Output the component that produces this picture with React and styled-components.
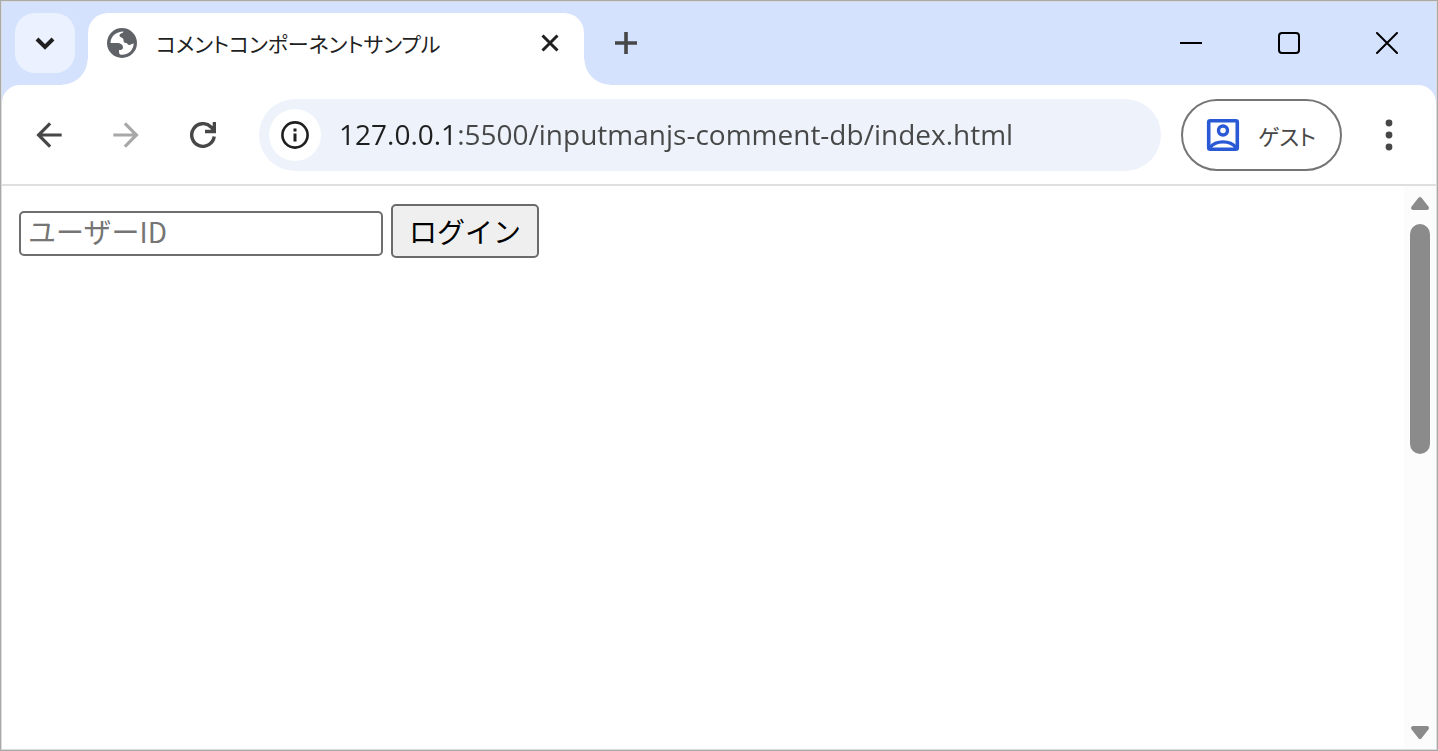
import { useState } from 'react';
import styled, { createGlobalStyle } from 'styled-components';

const GlobalStyle = createGlobalStyle`
  * {
    box-sizing: border-box;
  }

  body {
    margin: 0;
    background: #fff;
    font-family: "Noto Sans CJK JP", sans-serif;
  }

  button, input {
    margin: 0;
    font-family: inherit;
  }
`;

const Window = styled.div`
  display: flex;
  flex-direction: column;
  min-height: 100vh;
  border: 1px solid #a9a9a9;
  box-shadow: inset 0 0 0 1px #dcdcdc;
  padding: 1px;
`;

const TabStrip = styled.header`
  display: flex;
  align-items: flex-start;
  height: 83px;
  padding: 11px 0 0 13px;
  background: #d5e2fd;
`;

const IconButton = styled.button`
  display: flex;
  align-items: center;
  justify-content: center;
  flex: none;
  width: ${props => props.$size}px;
  height: ${props => props.$size}px;
  padding: 0;
  border: 0;
  border-radius: ${props => props.$radius || 0}px;
  background: ${props => props.$background || 'transparent'};
  color: ${props => props.$color || '#474747'};
`;

const Tab = styled.div`
  position: relative;
  display: flex;
  align-items: center;
  gap: 18px;
  flex: 0 1 496px;
  height: 72px;
  margin-left: 13px;
  padding: 0 14px 12px 18px;
  border-radius: 20px 20px 0 0;
  background: #fff;

  &::before,
  &::after {
    content: "";
    position: absolute;
    bottom: 0;
    width: 26px;
    height: 26px;
  }

  &::before {
    right: 100%;
    background: radial-gradient(circle at 0 0, transparent 25px, #fff 26px);
  }

  &::after {
    left: 100%;
    background: radial-gradient(circle at 100% 0, transparent 25px, #fff 26px);
  }
`;

const TabTitle = styled.span`
  flex: 1;
  overflow: hidden;
  white-space: nowrap;
  font-size: 21px;
  line-height: 32px;
  font-feature-settings: "palt";
  color: #1f1f1f;
`;

const NewTab = styled.div`
  margin-left: 12px;
`;

const WindowControls = styled.div`
  display: flex;
  gap: 38px;
  margin-left: auto;
  padding-right: 19px;
`;

const ToolbarBack = styled.div`
  background: #d5e2fd;
`;

const Toolbar = styled.div`
  display: flex;
  align-items: center;
  height: 101px;
  padding: 0 17px;
  border-bottom: 2px solid #dfdfdf;
  border-radius: 18px 18px 0 0;
  background: #fff;
`;

const NavButtons = styled.nav`
  display: flex;
  gap: 17px;
`;

const AddressBar = styled.div`
  display: flex;
  align-items: center;
  gap: 18px;
  flex: 1;
  height: 72px;
  margin: 0 20px 0 26px;
  padding: 0 24px 0 10px;
  border-radius: 36px;
  background: #edf2fb;
`;

/* The host part of the address is darker than the path after it. */
const AddressInput = styled.input`
  flex: 1;
  min-width: 0;
  height: 44px;
  padding: 0 0 2px;
  border: 0;
  outline: 0;
  font-family: "Open Sans", sans-serif;
  font-size: 28px;
  color: #474747;
  background: linear-gradient(to right, #1f1f1f 116px, #474747 116px);
  background-clip: text;
  -webkit-text-fill-color: transparent;
`;

const ProfileButton = styled.button`
  display: flex;
  align-items: center;
  gap: 16px;
  height: 72px;
  padding: 0 24px 0 21px;
  border: 2px solid #757575;
  border-radius: 36px;
  background: #fff;
  font-size: 22px;
  font-feature-settings: "palt";
  color: #474747;
`;

const MenuSlot = styled.div`
  margin-left: 17px;
`;

const Viewport = styled.div`
  display: flex;
  flex: 1;
`;

const Page = styled.main`
  flex: 1;
  padding: 18px 17px;
`;

const LoginForm = styled.form`
  display: flex;
  align-items: center;
  gap: 8px;
`;

const UserInput = styled.input`
  width: 364px;
  height: 45px;
  margin-top: 4px;
  padding: 0 6px 4px 7px;
  border: 2px solid #6e6e6e;
  border-radius: 5px;
  background: #fff;
  font-size: 28px;
  color: #000;

  &::placeholder {
    color: #757575;
  }
`;

const LoginButton = styled.button`
  height: 54px;
  padding: 0 16px;
  border: 2px solid #6b6b6b;
  border-radius: 5px;
  background: #efefef;
  font-size: 28px;
  line-height: 40px;
  color: #000;
`;

const Scrollbar = styled.div`
  display: flex;
  flex-direction: column;
  align-items: center;
  width: 32px;
  padding: 9px 0 8px;
  background: #fcfcfc;
`;

const Track = styled.div`
  flex: 1;
  width: 20px;
  margin: 13px 0 12px;
`;

const Thumb = styled.div`
  height: 47%;
  border-radius: 10px;
  background: #8b8b8b;
`;

const Icon = ({ size, box = 24, children, ...rest }) => (
  <svg width={size} height={size} viewBox={`0 0 ${box} ${box}`} fill="none" aria-hidden="true" {...rest}>
    {children}
  </svg>
);

const ScrollArrow = ({ down }) => (
  <svg width="20" height="16" viewBox="0 0 20 16" aria-hidden="true">
    <path
      d={down ? 'M3 3h14l-7 9z' : 'M3 13h14l-7-9z'}
      fill="#8b8b8b"
      stroke="#8b8b8b"
      strokeWidth="4"
      strokeLinejoin="round"
    />
  </svg>
);

const App = () => {
  const [ url, setUrl ] = useState('127.0.0.1:5500/inputmanjs-comment-db/index.html');
  const [ userId, setUserId ] = useState('');

  return (
    <Window>
      <GlobalStyle />
      <TabStrip>
        <IconButton $size={60} $radius={20} $background="#ebf1fe" $color="#1f1f1f" aria-label="タブを検索">
          <Icon size={20} box={20}>
            <path d="M2 6l8 8 8-8" stroke="currentColor" strokeWidth="4" />
          </Icon>
        </IconButton>
        <Tab>
          <Icon size={32} box={32}>
            <circle cx="16" cy="16" r="15" fill="#5f6368" />
            <path
              d="M4.500 16C4.500 9.500 10 4.500 17.500 4.500C17.500 6.500 13.500 6 13.500 8.500C13.500 11 17.500 10 17.500 13C17.500 15 18 16 20 16C21.500 16 21.500 18 23.500 18C25 18 25.500 16.500 27.700 16.500C27.500 23.500 22 28 15 27.700C13 27.500 13 26 13 23C15.500 23 17 22.500 17 20.500C17 17.500 14.500 16 11 16Z"
              fill="#fff"
            />
          </Icon>
          <TabTitle>コメントコンポーネントサンプル</TabTitle>
          <IconButton $size={40} $color="#1f1f1f" aria-label="タブを閉じる">
            <Icon size={18} box={18}>
              <path d="M1.500 1.500l15 15M16.500 1.500l-15 15" stroke="currentColor" strokeWidth="3" />
            </Icon>
          </IconButton>
        </Tab>
        <NewTab>
          <IconButton $size={60} aria-label="新しいタブ">
            <Icon size={22} box={22}>
              <path d="M11 0v22M0 11h22" stroke="currentColor" strokeWidth="3.600" />
            </Icon>
          </IconButton>
        </NewTab>
        <WindowControls>
          <IconButton $size={60} $color="#000" aria-label="最小化">
            <Icon size={22} box={22}>
              <path d="M0 11h22" stroke="currentColor" strokeWidth="2" />
            </Icon>
          </IconButton>
          <IconButton $size={60} $color="#000" aria-label="最大化">
            <Icon size={22} box={22}>
              <rect x="1" y="1" width="20" height="20" rx="3" stroke="currentColor" strokeWidth="2" />
            </Icon>
          </IconButton>
          <IconButton $size={60} $color="#000" aria-label="閉じる">
            <Icon size={22} box={22}>
              <path d="M1 1l20 20M21 1L1 21" stroke="currentColor" strokeWidth="2" strokeLinecap="round" />
            </Icon>
          </IconButton>
        </WindowControls>
      </TabStrip>
      <ToolbarBack>
        <Toolbar>
          <NavButtons>
            <IconButton $size={60} aria-label="戻る">
              <Icon size={38}>
                <path d="M20 11H7.830l5.590-5.590L12 4l-8 8 8 8 1.410-1.410L7.830 13H20z" fill="currentColor" />
              </Icon>
            </IconButton>
            <IconButton $size={60} $color="#a8a8a8" aria-label="進む">
              <Icon size={38}>
                <path d="M4 13h12.170l-5.590 5.590L12 20l8-8-8-8-1.410 1.410L16.170 11H4z" fill="currentColor" />
              </Icon>
            </IconButton>
            <IconButton $size={60} aria-label="再読み込み">
              <Icon size={26} box={26}>
                <path d="M24.200 14.500A11.300 11.300 0 1 1 21 5L24 8.500M24.400 0v9.500H15" stroke="currentColor" strokeWidth="3.400" />
              </Icon>
            </IconButton>
          </NavButtons>
          <AddressBar>
            <IconButton $size={52} $radius={26} $background="#fff" $color="#1f1f1f" aria-label="サイト情報を表示">
              <Icon size={28} box={28}>
                <circle cx="14" cy="14" r="12.600" stroke="currentColor" strokeWidth="2.600" />
                <path d="M14 12.500v8M14 7.500v3" stroke="currentColor" strokeWidth="3" />
              </Icon>
            </IconButton>
            <AddressInput
              type="text"
              aria-label="アドレスバー"
              spellCheck={false}
              value={url}
              onChange={(e) => setUrl(e.target.value)}
            />
          </AddressBar>
          <ProfileButton>
            <Icon size={38} box={38}>
              <rect x="4.700" y="4.700" width="28.600" height="28.600" rx="1.500" stroke="#2a59d6" strokeWidth="3.600" />
              <circle cx="19" cy="14.500" r="4.500" stroke="#2a59d6" strokeWidth="3.400" />
              <path d="M6 31.500c6-7.500 20-7.500 26 0" stroke="#2a59d6" strokeWidth="3.400" />
            </Icon>
            ゲスト
          </ProfileButton>
          <MenuSlot>
            <IconButton $size={60} aria-label="メニュー">
              <Icon size={32} box={32}>
                <circle cx="16" cy="4" r="3.400" fill="currentColor" />
                <circle cx="16" cy="16" r="3.400" fill="currentColor" />
                <circle cx="16" cy="28" r="3.400" fill="currentColor" />
              </Icon>
            </IconButton>
          </MenuSlot>
        </Toolbar>
      </ToolbarBack>
      <Viewport>
        <Page>
          <LoginForm onSubmit={(e) => e.preventDefault()}>
            <UserInput
              type="text"
              aria-label="ユーザーID"
              placeholder="ユーザーID"
              value={userId}
              onChange={(e) => setUserId(e.target.value)}
            />
            <LoginButton type="submit">ログイン</LoginButton>
          </LoginForm>
        </Page>
        <Scrollbar>
          <ScrollArrow />
          <Track>
            <Thumb />
          </Track>
          <ScrollArrow down />
        </Scrollbar>
      </Viewport>
    </Window>
  );
};

export default App;
